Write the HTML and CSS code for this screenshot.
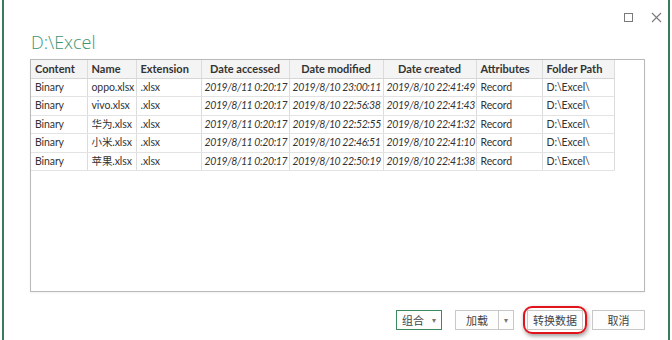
FILE: index.html
```html
<!DOCTYPE html>
<html>
<head>
<meta charset="utf-8">
<link rel="stylesheet" href="styles.css">
</head>
<body>
<div class="dialog">
  <div class="titlebar">
    <svg class="ctl" width="10" height="10" viewBox="0 0 10 10"><rect x="0.5" y="0.5" width="8" height="8" fill="none" stroke="#7a7a7a" stroke-width="1"/></svg>
    <svg class="ctl close" width="11" height="11" viewBox="0 0 11 11"><path d="M1 1L10 10M10 1L1 10" stroke="#7a7a7a" stroke-width="1.1" fill="none"/></svg>
  </div>
  <div class="title">D:\Excel</div>
  <div class="gridbox">
    <table class="grid">
      <colgroup>
        <col class="c1"><col class="c2"><col class="c3"><col class="c4"><col class="c5"><col class="c6"><col class="c7"><col class="c8">
      </colgroup>
      <thead>
        <tr><th>Content</th><th>Name</th><th>Extension</th><th class="ctr">Date accessed</th><th class="ctr">Date modified</th><th class="ctr">Date created</th><th>Attributes</th><th>Folder Path</th></tr>
      </thead>
      <tbody>
        <tr><td>Binary</td><td>oppo.xlsx</td><td>.xlsx</td><td class="it">2019/8/11 0:20:17</td><td class="it">2019/8/10 23:00:11</td><td class="it">2019/8/10 22:41:49</td><td>Record</td><td>D:\Excel\</td></tr>
        <tr><td>Binary</td><td>vivo.xlsx</td><td>.xlsx</td><td class="it">2019/8/11 0:20:17</td><td class="it">2019/8/10 22:56:38</td><td class="it">2019/8/10 22:41:43</td><td>Record</td><td>D:\Excel\</td></tr>
        <tr><td>Binary</td><td>华为.xlsx</td><td>.xlsx</td><td class="it">2019/8/11 0:20:17</td><td class="it">2019/8/10 22:52:55</td><td class="it">2019/8/10 22:41:32</td><td>Record</td><td>D:\Excel\</td></tr>
        <tr><td>Binary</td><td>小米.xlsx</td><td>.xlsx</td><td class="it">2019/8/11 0:20:17</td><td class="it">2019/8/10 22:46:51</td><td class="it">2019/8/10 22:41:10</td><td>Record</td><td>D:\Excel\</td></tr>
        <tr><td>Binary</td><td>苹果.xlsx</td><td>.xlsx</td><td class="it">2019/8/11 0:20:17</td><td class="it">2019/8/10 22:50:19</td><td class="it">2019/8/10 22:41:38</td><td>Record</td><td>D:\Excel\</td></tr>
      </tbody>
    </table>
  </div>
  <div class="footer">
    <div class="btn combine">组合<span class="caret">▾</span></div>
    <div class="split">
      <div class="btn load">加载</div>
      <div class="btn drop"><span class="caret">▾</span></div>
    </div>
    <div class="hl-wrap">
      <div class="btn transform">转换数据</div>
      <div class="highlight"></div>
    </div>
    <div class="btn cancel">取消</div>
  </div>
</div>
</body>
</html>
```
FILE: styles.css
```css
html, body {
  margin: 0;
  padding: 0;
  background: #ffffff;
}
body {
  width: 672px;
  height: 340px;
  overflow: hidden;
  font-family: Lato, "Noto Sans CJK SC", sans-serif;
  font-size: 11px;
  color: #333;
}
.dialog {
  margin-left: 2px;
  width: 664px;
  height: 340px;
  border-left: 2px solid #3b7a5a;
  border-right: 2px solid #3b7a5a;
  box-sizing: content-box;
  position: relative;
}
.titlebar {
  height: 31px;
  display: flex;
  justify-content: flex-end;
  align-items: flex-start;
  padding-right: 6px;
  box-sizing: border-box;
}
.ctl {
  margin-top: 12px;
  display: block;
}
.ctl:first-child {
  margin-top: 13px;
  margin-right: 17px;
}
.title {
  margin-left: 27px;
  font-family: "Open Sans", sans-serif;
  font-weight: 300;
  font-size: 18px;
  line-height: 22px;
  color: #3f9472;
  height: 22px;
}
.gridbox {
  margin-top: 6px;
  margin-left: 26px;
  width: 615px;
  height: 233px;
  border: 1px solid #b9b9b9;
  box-sizing: border-box;
  box-shadow: 0 1px 2px rgba(0,0,0,0.06);
}
.grid {
  border-collapse: collapse;
  table-layout: fixed;
  width: 583px;
}
.c1 { width: 56px; }
.c2 { width: 49px; }
.c3 { width: 65px; }
.c4 { width: 88px; }
.c5 { width: 94px; }
.c6 { width: 93px; }
.c7 { width: 66px; }
.c8 { width: 72px; }
.grid th, .grid td {
  height: 18.5px;
  padding: 0 0 0 4px;
  text-align: left;
  white-space: nowrap;
  overflow: hidden;
  border-right: 1px solid #dcdcdc;
  border-bottom: 1px solid #e3e3e3;
  box-sizing: border-box;
  line-height: 17px;
}
.grid td {
  font-size: 10.5px;
  letter-spacing: -0.1px;
}
.grid th {
  font-weight: bold;
  background: #f4f4f4;
  color: #333;
  height: 18px;
  border-bottom: 1px solid #d6d6d6;
}
.grid th.ctr {
  text-align: center;
  padding: 0;
}
.grid td.it {
  font-style: italic;
  font-size: 10.5px;
  letter-spacing: -0.4px;
  padding-left: 3px;
}
.footer {
  display: flex;
  align-items: center;
  margin-top: 18px;
  margin-left: 392px;
  height: 20px;
}
.btn {
  height: 20px;
  box-sizing: border-box;
  border: 1px solid #c8c8c8;
  background: #fdfdfd;
  font-size: 11px;
  color: #444;
  display: flex;
  align-items: center;
  justify-content: center;
  line-height: 1;
}
.combine {
  width: 46px;
  border-color: #3b8a5e;
  gap: 8px;
}
.caret {
  font-size: 8px;
  color: #777;
}
.split {
  display: flex;
  margin-left: 13px;
}
.load {
  width: 44px;
}
.drop {
  width: 15px;
  border-left: none;
}
.hl-wrap {
  position: relative;
  margin-left: 13px;
}
.transform {
  width: 56px;
}
.highlight {
  position: absolute;
  left: -4px;
  top: -4px;
  width: 64px;
  height: 28px;
  border: 2.5px solid #e0141a;
  border-radius: 9px;
  box-sizing: border-box;
  box-shadow: 1px 2px 4px rgba(0,0,0,0.4);
}
.cancel {
  width: 53px;
  margin-left: 9px;
}
```
